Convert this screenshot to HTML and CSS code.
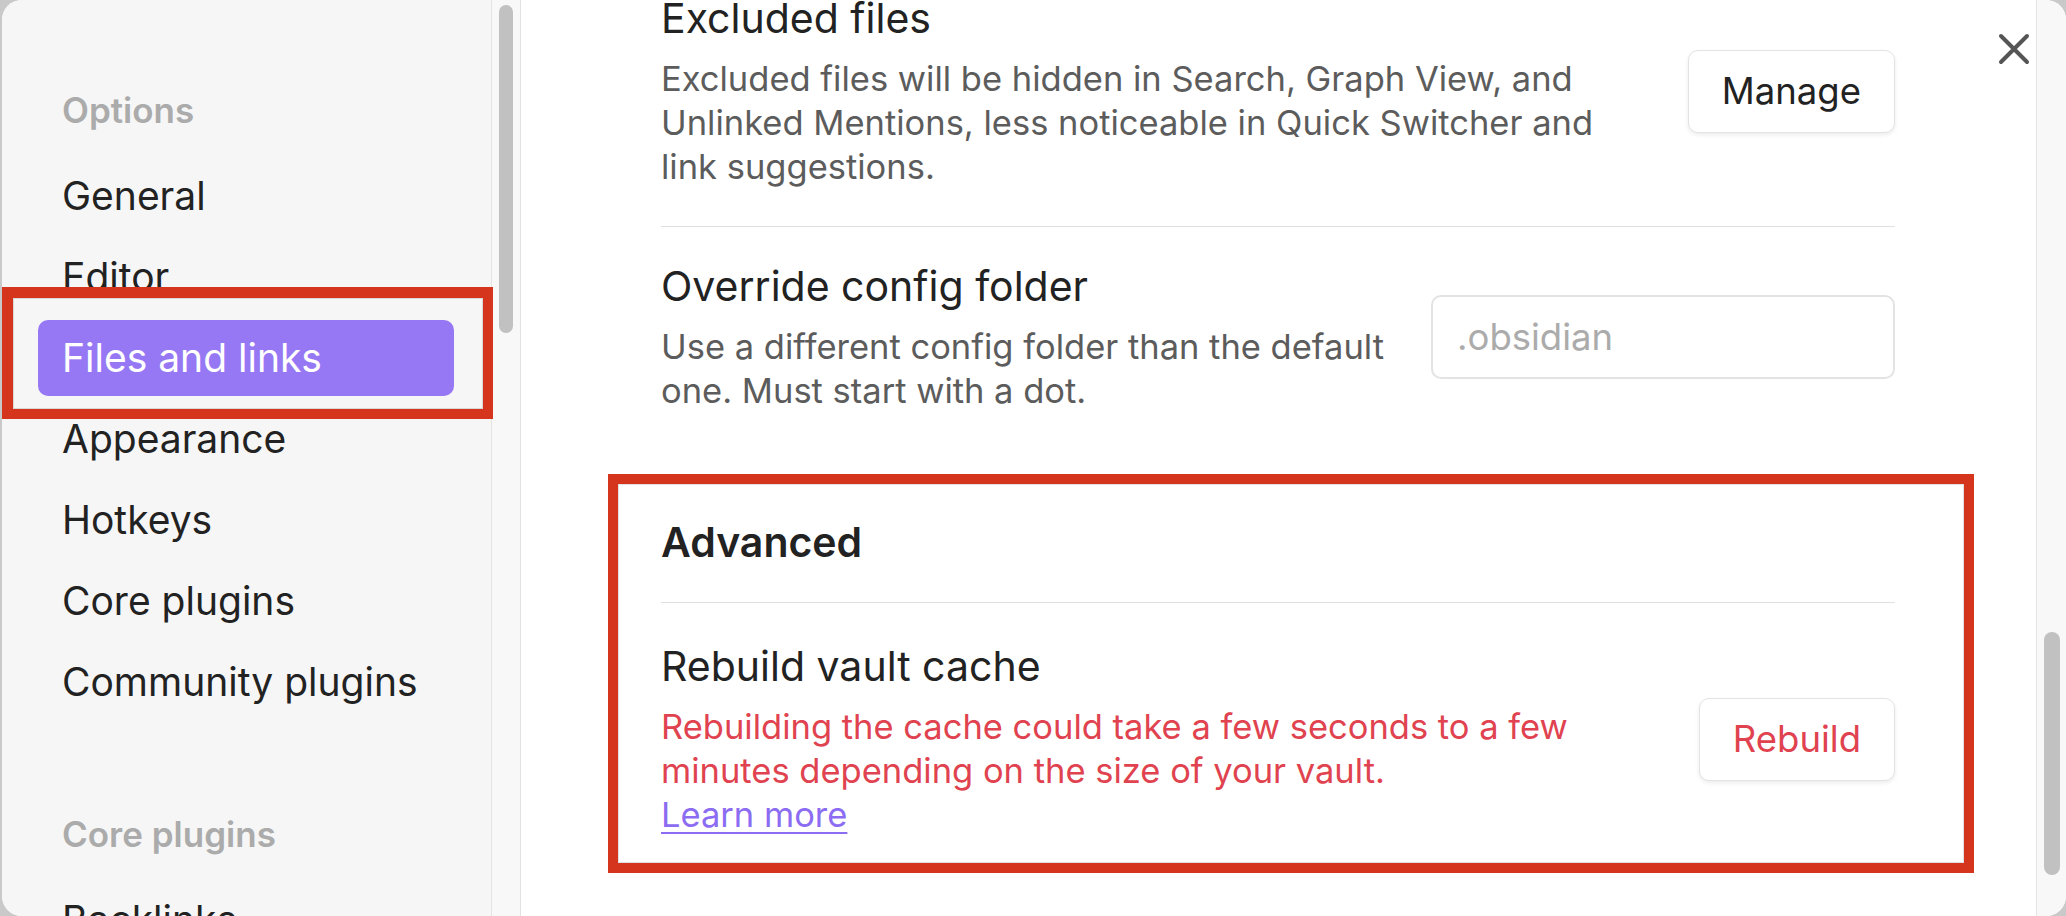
FILE: index.html
```html
<!DOCTYPE html>
<html lang="en">
<head>
<meta charset="utf-8">
<title>Settings</title>
<link rel="stylesheet" href="styles.css">
</head>
<body>
<div class="modal">
  <aside class="sidebar">
    <nav class="nav">
      <div class="nav-heading">Options</div>
      <div class="nav-item">General</div>
      <div class="nav-item">Editor</div>
      <div class="nav-item active">Files and links</div>
      <div class="nav-item">Appearance</div>
      <div class="nav-item">Hotkeys</div>
      <div class="nav-item">Core plugins</div>
      <div class="nav-item">Community plugins</div>
      <div class="nav-heading second">Core plugins</div>
      <div class="nav-item">Backlinks</div>
    </nav>
    <div class="track"><div class="thumb thumb-side"></div></div>
  </aside>
  <main class="content">
    <div class="settings">
      <div class="setting first">
        <div class="info">
          <div class="name">Excluded files</div>
          <div class="desc">Excluded files will be hidden in Search, Graph View, and Unlinked Mentions, less noticeable in Quick Switcher and link suggestions.</div>
        </div>
        <div class="control"><button class="btn">Manage</button></div>
      </div>
      <div class="setting">
        <div class="info">
          <div class="name">Override config folder</div>
          <div class="desc">Use a different config folder than the default one. Must start with a dot.</div>
        </div>
        <div class="control"><input class="text-input" type="text" placeholder=".obsidian"></div>
      </div>
      <div class="setting heading">
        <div class="name">Advanced</div>
      </div>
      <div class="setting after-heading">
        <div class="info">
          <div class="name">Rebuild vault cache</div>
          <div class="desc warning">Rebuilding the cache could take a few seconds to a few minutes depending on the size of your vault.<br><a class="link" href="#">Learn more</a></div>
        </div>
        <div class="control"><button class="btn danger">Rebuild</button></div>
      </div>
    </div>
  </main>
  <div class="track track-right"><div class="thumb thumb-main"></div></div>
  <button class="close" aria-label="Close">
    <svg viewBox="0 0 32 32" width="32" height="32"><path d="M3 3 L29 29 M29 3 L3 29" stroke="#555" stroke-width="4" stroke-linecap="round" fill="none"/></svg>
  </button>
  <div class="annot annot-nav"></div>
  <div class="annot annot-adv"></div>
</div>
</body>
</html>
```
FILE: styles.css
```css
* { box-sizing: border-box; }
html, body {
  margin: 0;
  height: 100%;
  overflow: hidden;
}
body {
  background: #c9c9c9;
  font-family: Inter, "Noto Sans", sans-serif;
  color: #222;
}
.modal {
  position: relative;
  margin-left: 2px;
  width: calc(100% - 2px);
  height: 916px;
  border-radius: 20px;
  overflow: hidden;
  display: flex;
  background: #fff;
}
.sidebar {
  width: 519px;
  flex: none;
  display: flex;
  background: #f6f6f6;
}
.nav {
  width: 489px;
  padding: 90px 0 0 36px;
  display: flex;
  flex-direction: column;
}
.nav-heading {
  font-size: 35px;
  font-weight: 600;
  line-height: 40px;
  color: #ababab;
  padding-left: 24px;
  margin-bottom: 28px;
  white-space: nowrap;
}
.nav-heading.second {
  margin-top: 89px;
}
.nav-item {
  width: 416px;
  height: 76px;
  line-height: 76px;
  padding-left: 24px;
  margin-bottom: 5px;
  font-size: 39px;
  color: #222;
  border-radius: 10px;
  white-space: nowrap;
}
.nav-item.active {
  background: #9778f4;
  color: #fff;
}
.track {
  width: 30px;
  flex: none;
  background: #f8f8f8;
  border-left: 1px solid #e4e4e4;
  border-right: 1px solid #e2e2e2;
  padding-left: 7px;
}
.thumb {
  background: #c1c1c1;
  border-radius: 8px;
}
.thumb-side {
  width: 14px;
  height: 328px;
  margin-top: 5px;
}
.track-right {
  border-right: none;
  padding-left: 7px;
  flex: none;
}
.thumb-main {
  width: 16px;
  height: 243px;
  margin-top: 632px;
}
.content {
  flex: 1;
  background: #fff;
  padding: 0 141px 0 140px;
}
.setting {
  display: flex;
  align-items: center;
  border-top: 1px solid #e0e0e0;
  padding: 34px 0 37px;
}
.setting.first {
  border-top: none;
  padding-top: 0;
  margin-top: -7px;
}
.info {
  flex: 1;
  margin-right: 32px;
}
.name {
  font-size: 41px;
  line-height: 50px;
  color: #222;
  white-space: nowrap;
}
.desc {
  font-size: 34.5px;
  line-height: 44px;
  color: #5c5c5c;
  margin-top: 14px;
}
.desc.warning {
  color: #e0434f;
}
.link {
  color: #8b6cf2;
  text-decoration: underline;
  text-decoration-thickness: 2px;
  text-underline-offset: 5px;
}
.setting.heading {
  border-top: none;
  padding-top: 67px;
  padding-bottom: 35px;
  border-bottom: 1px solid #e0e0e0;
}
.setting.heading .name {
  font-weight: 600;
}
.setting.after-heading {
  border-top: none;
  padding-top: 38px;
}
.control {
  flex: none;
  min-width: 240px;
  display: flex;
  justify-content: flex-end;
}
.btn {
  height: 83px;
  padding: 0 33px;
  border: 1px solid #e3e3e3;
  border-radius: 10px;
  background: #fff;
  font-family: inherit;
  font-size: 36.5px;
  color: #222;
  box-shadow: 0 2px 4px rgba(0, 0, 0, 0.08);
}
.btn.danger {
  color: #e0434f;
}
.text-input {
  width: 464px;
  height: 84px;
  border: 2px solid #e3e3e3;
  border-radius: 10px;
  padding: 0 24px;
  font-family: inherit;
  font-size: 36.5px;
  color: #222;
  background: #fff;
}
.text-input::placeholder {
  color: #ababab;
}
.close {
  position: absolute;
  left: 1996px;
  top: 33px;
  width: 34px;
  height: 32px;
  padding: 0;
  border: none;
  background: transparent;
}
.close svg { display: block; }
.annot {
  position: absolute;
  border: 10px solid #d4351c;
  box-shadow: inset 0 0 0 1px rgba(0, 0, 0, 0.12);
  pointer-events: none;
}
.annot-nav {
  left: 0;
  top: 287px;
  width: 491px;
  height: 132px;
  border-left-width: 11px;
  border-top-width: 11px;
}
.annot-adv {
  left: 606px;
  top: 474px;
  width: 1366px;
  height: 399px;
}
```
